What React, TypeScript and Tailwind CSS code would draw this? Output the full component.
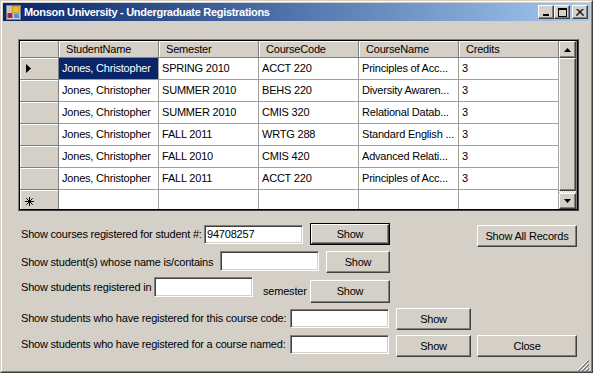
import React from 'react';

const rows = [
  { name: 'Jones, Christopher', sem: 'SPRING 2010', code: 'ACCT 220', course: 'Principles of Acc...', credits: '3' },
  { name: 'Jones, Christopher', sem: 'SUMMER 2010', code: 'BEHS 220', course: 'Diversity Awaren...', credits: '3' },
  { name: 'Jones, Christopher', sem: 'SUMMER 2010', code: 'CMIS 320', course: 'Relational Datab...', credits: '3' },
  { name: 'Jones, Christopher', sem: 'FALL 2011', code: 'WRTG 288', course: 'Standard English ...', credits: '3' },
  { name: 'Jones, Christopher', sem: 'FALL 2010', code: 'CMIS 420', course: 'Advanced Relati...', credits: '3' },
  { name: 'Jones, Christopher', sem: 'FALL 2011', code: 'ACCT 220', course: 'Principles of Acc...', credits: '3' },
];

const headers = ['StudentName', 'Semester', 'CourseCode', 'CourseName', 'Credits'];

const raised =
  'border border-t-white border-l-white border-b-[#404040] border-r-[#404040] shadow-[inset_-1px_-1px_0_#808080] bg-[#d4d0c8]';
const sunken =
  'border border-t-[#808080] border-l-[#808080] border-b-white border-r-white shadow-[inset_1px_1px_0_#404040,inset_-1px_-1px_0_#d4d0c8] bg-white';

function Button({ label, className, isDefault }: { label: string; className: string; isDefault?: boolean }) {
  if (isDefault) {
    return (
      <div className={`border border-black flex ${className}`}>
        <div className={`${raised} flex-1 flex items-center justify-center`}>{label}</div>
      </div>
    );
  }
  return <div className={`${raised} flex items-center justify-center ${className}`}>{label}</div>;
}

function TextBox({ value, className }: { value?: string; className: string }) {
  return (
    <div className={`${sunken} flex items-center pl-[2px] ${className}`}>
      {value}
    </div>
  );
}

function TitleButton({ children }: { children: React.ReactNode }) {
  return (
    <div className={`${raised} w-[16px] h-[14px] flex items-center justify-center`}>{children}</div>
  );
}

function Grid() {
  return (
    <div className="ml-[15px] mt-[18px] w-[561px] h-[172px] border border-t-[#808080] border-l-[#808080] border-b-[#404040] border-r-[#404040] flex">
      <div className="flex-1 border border-black flex overflow-hidden bg-[#808080]">
        <div className="flex flex-col w-[539px] overflow-hidden">
          {/* header */}
          <div className="flex h-[17px] shrink-0 bg-[#d4d0c8]">
            <div className="w-[39px] h-full border-r border-b border-r-[#808080] border-b-[#808080] shadow-[inset_1px_1px_0_white]" />
            {headers.map((h) => (
              <div
                key={h}
                className="w-[100px] h-full border-r border-b border-r-[#808080] border-b-[#808080] shadow-[inset_1px_1px_0_white] pl-[7px] flex items-center"
              >
                {h}
              </div>
            ))}
          </div>
          {rows.map((r, i) => (
            <div key={i} className="flex h-[22px] shrink-0">
              <div className="w-[39px] h-full bg-[#d4d0c8] border-r border-b border-r-[#808080] border-b-[#808080] shadow-[inset_1px_1px_0_white] flex items-center pl-[6px]">
                {i === 0 && (
                  <svg width="5" height="9" viewBox="0 0 5 9">
                    <path d="M0 0 L5 4.5 L0 9 Z" fill="black" />
                  </svg>
                )}
              </div>
              {[r.name, r.sem, r.code, r.course, r.credits].map((v, j) => (
                <div
                  key={j}
                  className={`w-[100px] h-full border-r border-b border-[#a0a0a0] pl-[3px] flex items-center whitespace-nowrap overflow-hidden ${
                    i === 0 && j === 0 ? 'bg-[#0a246a] text-white' : 'bg-white'
                  }`}
                >
                  {v}
                </div>
              ))}
            </div>
          ))}
          {/* new row */}
          <div className="flex h-[22px] shrink-0">
            <div className="w-[39px] h-full bg-[#d4d0c8] border-r border-r-[#808080] shadow-[inset_1px_1px_0_white] flex items-center pl-[5px]">
              <svg width="9" height="9" viewBox="0 0 9 9" stroke="black" strokeWidth="1">
                <path d="M4.5 0 V9 M0 4.5 H9 M1.3 1.3 L7.7 7.7 M7.7 1.3 L1.3 7.7" />
              </svg>
            </div>
            {headers.map((h) => (
              <div key={h} className="w-[100px] h-full bg-white border-r border-[#a0a0a0]" />
            ))}
          </div>
        </div>
        {/* scrollbar */}
        <div className="w-[17px] flex flex-col bg-[repeating-conic-gradient(#d4d0c8_0_25%,white_0_50%)] bg-[length:2px_2px]">
          <div className={`${raised} h-[17px] shrink-0 flex items-center justify-center`}>
            <svg width="7" height="4" viewBox="0 0 7 4">
              <path d="M3.5 0 L7 4 L0 4 Z" fill="black" />
            </svg>
          </div>
          <div className={`${raised} h-[133px] shrink-0`} />
          <div className="flex-1" />
          <div className={`${raised} h-[16px] shrink-0 flex items-center justify-center`}>
            <svg width="7" height="4" viewBox="0 0 7 4">
              <path d="M0 0 L7 0 L3.5 4 Z" fill="black" />
            </svg>
          </div>
        </div>
      </div>
    </div>
  );
}

export default function App() {
  return (
    <div
      className="w-[593px] h-[373px] border border-t-[#d4d0c8] border-l-[#d4d0c8] border-b-[#404040] border-r-[#404040] bg-[#d4d0c8] text-[11px] leading-[13px] tracking-[-0.2px] text-black"
      style={{ fontFamily: '"Liberation Sans", Arial, sans-serif' }}
    >
      <div className="h-full border border-t-white border-l-white border-b-[#808080] border-r-[#808080] p-[1px] flex flex-col">
        {/* title bar */}
        <div className="h-[18px] shrink-0 bg-gradient-to-r from-[#0a246a] to-[#a6caf0] flex items-center pl-[3px] pr-[2px]">
          <svg width="15" height="15" viewBox="0 0 15 15" className="shrink-0">
            <rect x="0.5" y="0.5" width="14" height="14" fill="#d4d0c8" stroke="#808080" />
            <rect x="2" y="2" width="3" height="2" fill="#c0c0c0" />
            <rect x="2" y="5" width="3" height="2" fill="#c0c0c0" />
            <rect x="1.5" y="8" width="5" height="5" fill="#d02020" />
            <rect x="3" y="9.5" width="2" height="2" fill="#2040c0" />
            <rect x="6" y="1.5" width="7" height="6" fill="#f0c020" stroke="#a07000" strokeWidth="0.5" />
            <rect x="8" y="8.5" width="5" height="4.5" fill="#5090e0" />
          </svg>
          <div className="ml-[3px] flex-1 text-white font-bold text-[11px] tracking-[-0.3px] whitespace-nowrap">
            Monson University - Undergraduate Registrations
          </div>
          <div className="flex items-center">
            <TitleButton>
              <svg width="8" height="7" viewBox="0 0 8 7">
                <rect x="1" y="5" width="6" height="2" fill="black" />
              </svg>
            </TitleButton>
            <TitleButton>
              <svg width="9" height="9" viewBox="0 0 9 9">
                <rect x="0.5" y="0.5" width="8" height="8" fill="none" stroke="black" />
                <rect x="0" y="0" width="9" height="2" fill="black" />
              </svg>
            </TitleButton>
            <div className="ml-[2px]">
              <TitleButton>
                <svg width="8" height="7" viewBox="0 0 8 7">
                  <path d="M0.5 0 L7.5 7 M7.5 0 L0.5 7 M1.5 0 L8 6.5 M6.5 0 L0 6.5" stroke="black" strokeWidth="1" />
                </svg>
              </TitleButton>
            </div>
          </div>
        </div>

        <Grid />

        {/* controls */}
        <div className="mt-[12px] flex flex-col">
          <div className="flex items-start h-[28px]">
            <div className="ml-[18px] w-[183px] mt-[5px] whitespace-nowrap">Show courses registered for student #:</div>
            <TextBox value="94708257" className="mt-[2px] w-[99px] h-[19px]" />
            <Button label="Show" isDefault className="ml-[7px] w-[80px] h-[22px]" />
            <Button label="Show All Records" className="ml-[87px] mt-[2px] w-[100px] h-[22px]" />
          </div>
          <div className="flex items-start h-[26px]">
            <div className="ml-[18px] w-[199px] mt-[5px] whitespace-nowrap">Show student(s) whose name is/contains</div>
            <TextBox className="w-[99px] h-[20px]" />
            <Button label="Show" className="ml-[7px] w-[64px] h-[22px]" />
          </div>
          <div className="flex items-start h-[31px]">
            <div className="ml-[18px] w-[133px] mt-[4px] whitespace-nowrap">Show students registered in</div>
            <TextBox className="w-[99px] h-[20px]" />
            <div className="ml-[10px] w-[47px] mt-[8px]">semester</div>
            <Button label="Show" className="mt-[3px] w-[80px] h-[23px]" />
          </div>
          <div className="flex items-start h-[27px]">
            <div className="ml-[18px] w-[269px] mt-[4px] whitespace-nowrap">
              Show students who have registered for this course code:
            </div>
            <TextBox className="mt-[1px] w-[99px] h-[19px]" />
            <Button label="Show" className="ml-[7px] w-[75px] h-[22px]" />
          </div>
          <div className="flex items-start h-[24px]">
            <div className="ml-[18px] w-[269px] mt-[3px] whitespace-nowrap">
              Show students who have registered for a course named:
            </div>
            <TextBox className="w-[99px] h-[19px]" />
            <Button label="Show" className="ml-[7px] w-[75px] h-[22px]" />
            <Button label="Close" className="ml-[6px] w-[100px] h-[22px]" />
          </div>
        </div>

        <div className="flex-1 flex justify-end items-end">
          <svg width="12" height="12" viewBox="0 0 12 12" className="mb-[1px] mr-[1px]">
            <path d="M11 1 L1 11 M11 5 L5 11 M11 9 L9 11" stroke="white" strokeWidth="1" />
            <path d="M12 1 L1 12 M12 2 L2 12 M12 5 L5 12 M12 6 L6 12 M12 9 L9 12 M12 10 L10 12" stroke="#808080" strokeWidth="1" />
          </svg>
        </div>
      </div>
    </div>
  );
}
